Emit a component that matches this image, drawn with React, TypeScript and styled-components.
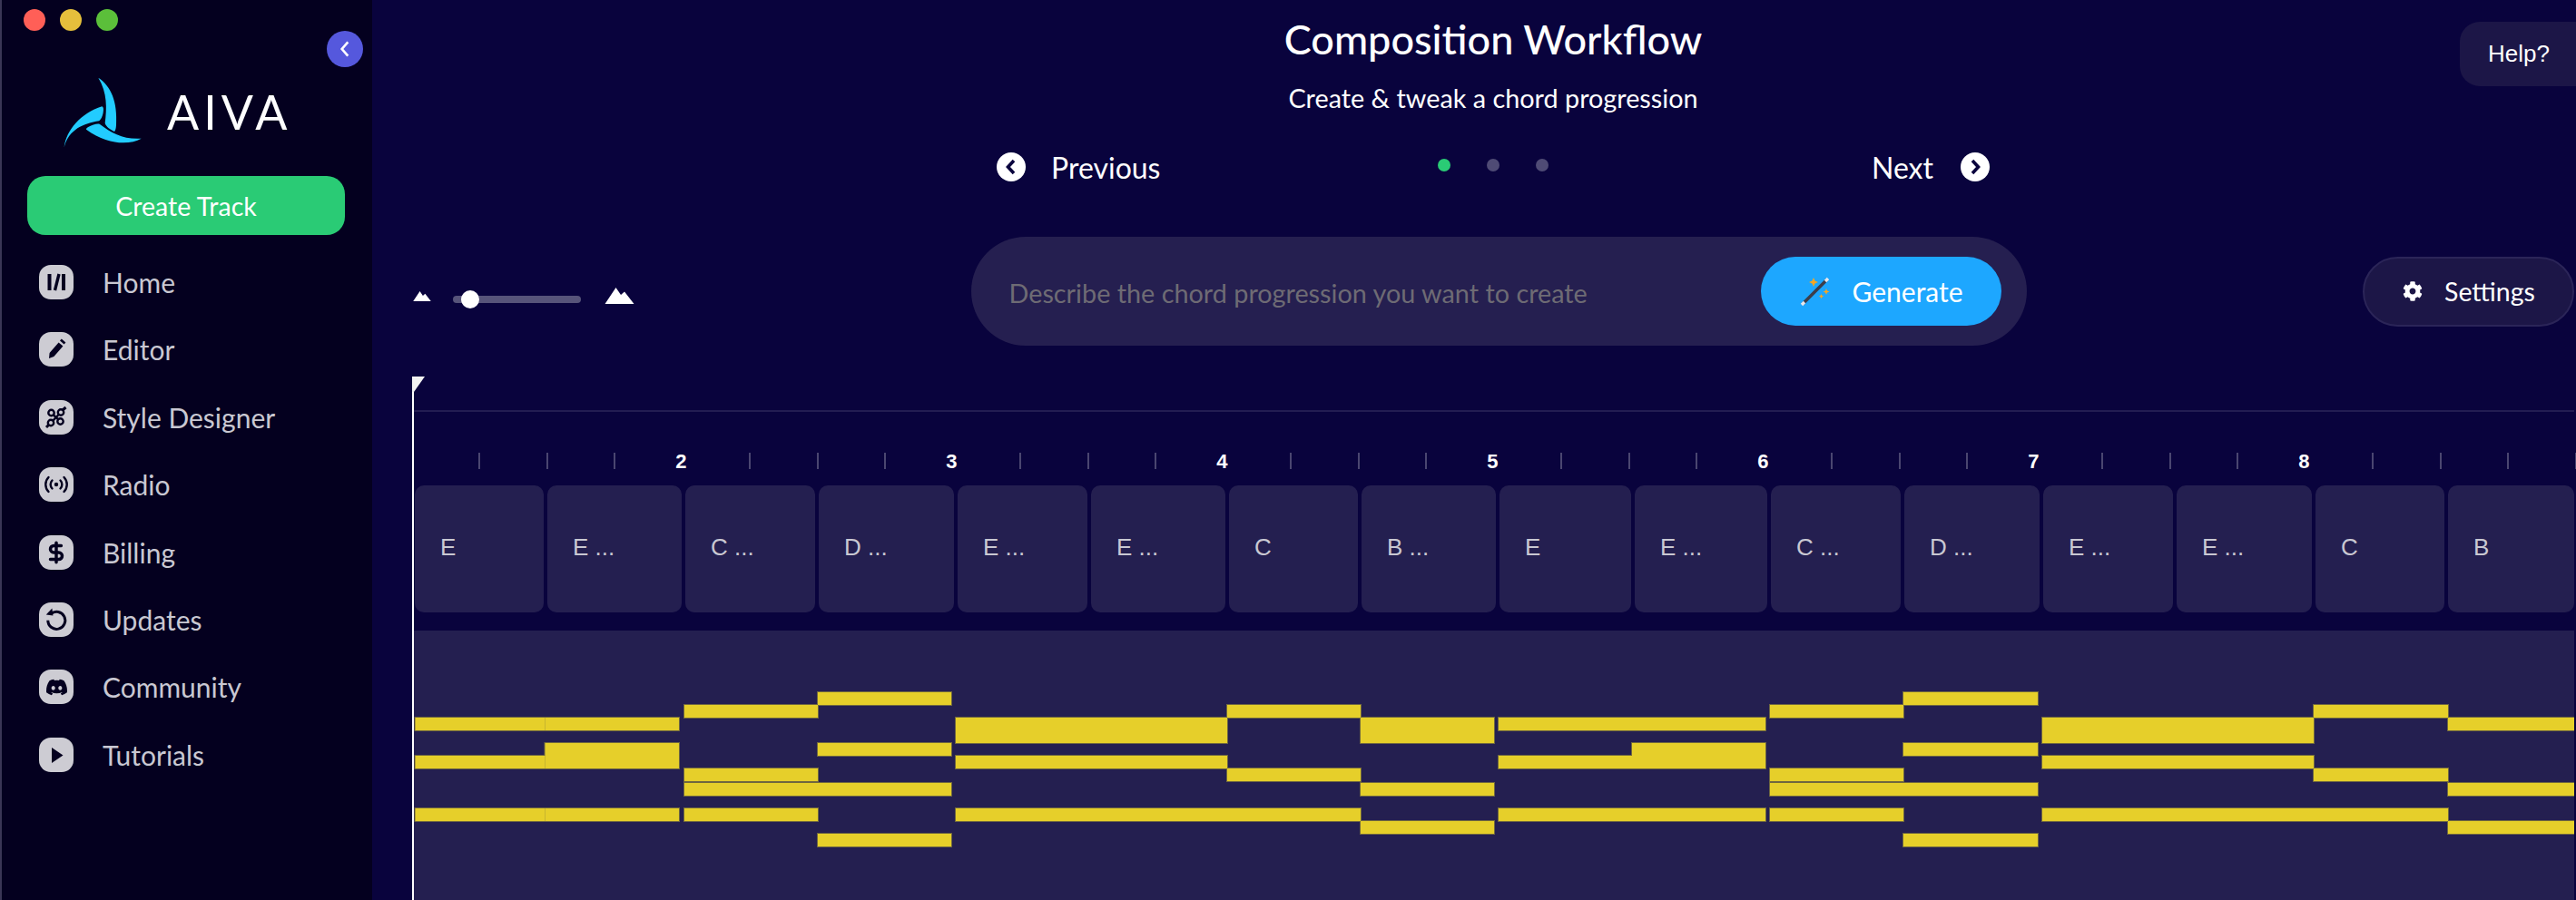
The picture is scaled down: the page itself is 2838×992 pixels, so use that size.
import { ReactNode } from "react";
import styled, { createGlobalStyle } from "styled-components";
import { DollarSign } from "lucide-react";
import { FaCog, FaDiscord } from "react-icons/fa";

const GlobalStyle = createGlobalStyle`
  html, body {
    margin: 0;
    padding: 0;
    background: #09033d;
  }
`;

const Page = styled.div`
  display: flex;
  width: 2838px;
  height: 992px;
  overflow: hidden;
  font-family: Lato, "Open Sans", sans-serif;
  color: #fff;
  background: #09033d;
`;

const Sidebar = styled.aside`
  position: relative;
  flex: 0 0 408px;
  display: flex;
  flex-direction: column;
  border-left: 2px solid #3a3655;
  background: #04001f;
`;

const WindowDots = styled.div`
  display: flex;
  gap: 16px;
  padding: 10px 0 0 24px;
`;

const WindowDot = styled.span<{ $color: string }>`
  width: 24px;
  height: 24px;
  border-radius: 50%;
  background: ${(p) => p.$color};
`;

const CollapseButton = styled.button`
  position: absolute;
  top: 34px;
  right: 10px;
  width: 40px;
  height: 40px;
  padding: 0;
  display: flex;
  align-items: center;
  justify-content: center;
  border: 0;
  border-radius: 50%;
  background: #5558dd;
`;

const Brand = styled.div`
  display: flex;
  align-items: center;
  gap: 15px;
  height: 95px;
  margin: 41px 0 0 57px;
`;

const BrandName = styled.div`
  font-size: 52px;
  line-height: 52px;
  letter-spacing: 5px;
`;

const CreateButton = styled.button`
  width: 350px;
  height: 65px;
  margin: 24px 0 0 28px;
  border: 0;
  border-radius: 20px;
  background: #2acb75;
  color: #fff;
  font-family: inherit;
  font-size: 28.5px;
`;

const Nav = styled.nav`
  display: flex;
  flex-direction: column;
  gap: 36.4px;
  margin: 33px 0 0 41px;
`;

const NavRow = styled.div`
  display: flex;
  align-items: center;
  gap: 32px;
  height: 38px;
  font-size: 30px;
  color: #c9c8d2;
`;

const NavIcon = styled.span`
  flex: 0 0 38px;
  height: 38px;
  display: flex;
  align-items: center;
  justify-content: center;
  border-radius: 13px;
  background: #cdccd3;
  color: #04001f;
`;

const Main = styled.main`
  position: relative;
  flex: 1;
  min-width: 0;
  display: flex;
  flex-direction: column;
  padding-left: 44px;
  padding-right: 2px;
`;

const HelpButton = styled.button`
  position: absolute;
  top: 24px;
  right: -20px;
  width: 148px;
  height: 71px;
  padding: 0 18px 0 0;
  border: 0;
  border-radius: 22px;
  background: #1c1647;
  color: #fff;
  font-family: "Liberation Sans", Arial, sans-serif;
  font-size: 26px;
`;

const Header = styled.header`
  display: flex;
  flex-direction: column;
  align-items: center;
`;

const Title = styled.h1`
  margin: 15px 0 0;
  font-size: 45px;
  line-height: 56px;
  font-weight: 500;
`;

const Subtitle = styled.div`
  margin-top: 19px;
  font-size: 28.8px;
  line-height: 36px;
`;

const Stepper = styled.div`
  display: flex;
  align-items: center;
  width: 1094px;
  height: 40px;
  margin: 38px auto 0;
`;

const StepLink = styled.div<{ $end?: boolean }>`
  flex: 1;
  display: flex;
  align-items: center;
  justify-content: ${(p) => (p.$end ? "flex-end" : "flex-start")};
  gap: ${(p) => (p.$end ? 30 : 28)}px;
  font-size: 32px;
`;

const Pager = styled.div`
  display: flex;
  gap: 40px;
  margin-top: -4px;
`;

const PagerDot = styled.span<{ $active?: boolean }>`
  width: 14px;
  height: 14px;
  border-radius: 50%;
  background: ${(p) => (p.$active ? "#2acb75" : "#4f4b75")};
`;

const Toolbar = styled.div`
  display: flex;
  align-items: center;
  justify-content: space-between;
  margin-top: 57px;
  padding-left: 1px;
`;

const ZoomControl = styled.div`
  display: flex;
  align-items: center;
  gap: 24px;
  margin-top: 18px;
`;

const ZoomPeak = styled.svg<{ $gap?: number }>`
  margin-bottom: 8px;
  margin-left: ${(p) => p.$gap ?? 0}px;
`;

const SliderTrack = styled.div`
  position: relative;
  width: 141px;
  height: 8px;
  border-radius: 4px;
  background: #57547a;
`;

const SliderThumb = styled.span`
  position: absolute;
  top: -6px;
  left: 9px;
  width: 20px;
  height: 20px;
  border-radius: 50%;
  background: #fff;
`;

const PromptBar = styled.div`
  display: flex;
  align-items: center;
  justify-content: space-between;
  width: 1163px;
  height: 120px;
  padding: 0 28px 0 42px;
  box-sizing: border-box;
  border-radius: 60px;
  background: #251f50;
`;

const Placeholder = styled.div`
  margin-top: 4px;
  font-size: 28.8px;
  color: #6e6b74;
`;

const GenerateButton = styled.button`
  display: flex;
  align-items: center;
  gap: 24px;
  width: 265px;
  height: 76px;
  padding: 0 0 0 43px;
  border: 0;
  border-radius: 38px;
  background: #1da7ff;
  color: #fff;
  font-family: inherit;
  font-size: 30px;
`;

const SettingsButton = styled.button`
  display: flex;
  align-items: center;
  gap: 24px;
  width: 233px;
  height: 77px;
  padding: 0 0 0 42px;
  box-sizing: border-box;
  border: 2px solid #2b2558;
  border-radius: 39px;
  background: #1c1647;
  color: #fff;
  font-family: inherit;
  font-size: 28.5px;
`;

const Timeline = styled.section`
  position: relative;
  flex: 1;
  min-height: 0;
  display: flex;
  flex-direction: column;
  margin-top: 34px;
  padding-left: 2px;
`;

const Playhead = styled.div`
  position: absolute;
  top: 0;
  bottom: 0;
  left: 0;
  width: 2px;
  background: #fff;
`;

const PlayheadFlag = styled.svg`
  position: absolute;
  top: 0;
  left: 0;
`;

const TopRule = styled.div`
  height: 37px;
  border-bottom: 2px solid #231d52;
`;

const Ruler = styled.div`
  display: flex;
  height: 18px;
  margin: 45px 0 0 -2px;
  padding-left: 0.5px;
`;

const RulerCell = styled.div`
  flex: 0 0 74.5px;
  display: flex;
  justify-content: flex-end;
`;

const Tick = styled.span`
  width: 2px;
  height: 18px;
  background: #4a4670;
`;

const BarNumber = styled.span`
  margin-right: -4px;
  font-family: "Liberation Sans", Arial, sans-serif;
  font-size: 22px;
  line-height: 20px;
  font-weight: 700;
`;

const ChordRow = styled.div`
  display: flex;
  gap: 4px;
  height: 140px;
  margin: 18px 0 0 1px;
`;

const ChordCard = styled.div<{ $width: number }>`
  flex: 0 0 ${(p) => p.$width}px;
  display: flex;
  align-items: center;
  padding: 0 0 3px 28px;
  box-sizing: border-box;
  border-radius: 10px;
  background: #241f50;
  color: #c9c8d2;
  font-family: "Liberation Sans", Arial, sans-serif;
  font-size: 26px;
`;

const RollPanel = styled.div`
  flex: 1;
  min-height: 0;
  margin-top: 20px;
  background: #241f50;
`;

const RollSvg = styled.svg`
  display: block;
`;

type Note = [number, number];

const NAV_ITEMS: { label: string; icon: ReactNode }[] = [
  {
    label: "Home",
    icon: (
      <svg width="38" height="38" viewBox="0 0 38 38" fill="none" stroke="currentColor" strokeWidth="4">
        <path d="M11.500 10v18" />
        <path d="M22 10l-4.500 18" strokeWidth="3.400" />
        <path d="M27 10v18" />
      </svg>
    ),
  },
  {
    label: "Editor",
    icon: (
      <svg width="38" height="38" viewBox="0 0 38 38" fill="currentColor">
        <path d="M11 29l.6-6L21.600 11.600l4.800 4L16.400 27z" />
        <path d="M23 9.600l1.800-2 4.600 3.800-1.800 2.200z" />
      </svg>
    ),
  },
  {
    label: "Style Designer",
    icon: (
      <svg width="38" height="38" viewBox="0 0 38 38" fill="none" stroke="currentColor" strokeWidth="2.400">
        <circle cx="13.500" cy="14" r="3.200" />
        <circle cx="23.500" cy="23.500" r="3.200" />
        <circle cx="24" cy="13.500" r="3.200" />
        <circle cx="13" cy="25" r="3.200" />
        <path d="M16 16.500l5 4.600" />
        <path d="M26 11l3.500-3" strokeWidth="3" />
        <path d="M10.500 27.500L8 30" strokeWidth="3" />
        <path d="M21.600 16l-6.200 6.600" />
      </svg>
    ),
  },
  {
    label: "Radio",
    icon: (
      <svg width="38" height="38" viewBox="0 0 38 38" fill="none" stroke="currentColor" strokeWidth="2.400" strokeLinecap="round">
        <circle cx="19" cy="19" r="2.200" fill="currentColor" stroke="none" />
        <path d="M14.500 14.500a6.400 6.400 0 0 0 0 9" />
        <path d="M23.500 14.500a6.400 6.400 0 0 1 0 9" />
        <path d="M10.500 11a11.500 11.500 0 0 0 0 16" />
        <path d="M27.500 11a11.500 11.500 0 0 1 0 16" />
      </svg>
    ),
  },
  { label: "Billing", icon: <DollarSign size={26} strokeWidth={3.2} /> },
  {
    label: "Updates",
    icon: (
      <svg width="38" height="38" viewBox="0 0 38 38" fill="none" stroke="currentColor" strokeWidth="3">
        <path d="M13.200 12.600a9.500 9.500 0 1 1-3.400 7.200" />
        <path d="M14.400 6.400l1 8.200-7.600-1.200z" fill="currentColor" stroke="none" />
      </svg>
    ),
  },
  { label: "Community", icon: <FaDiscord size={25} /> },
  {
    label: "Tutorials",
    icon: (
      <svg width="38" height="38" viewBox="0 0 38 38" fill="currentColor">
        <path d="M14 11l12.500 8.500L14 28z" />
      </svg>
    ),
  },
];

const CHORDS: { label: string; width: number }[] = [
  { label: "E", width: 142 },
  { label: "E ...", width: 148 },
  { label: "C ...", width: 143 },
  { label: "D ...", width: 149 },
  { label: "E ...", width: 143 },
  { label: "E ...", width: 148 },
  { label: "C", width: 142 },
  { label: "B ...", width: 148 },
  { label: "E", width: 145 },
  { label: "E ...", width: 146 },
  { label: "C ...", width: 143 },
  { label: "D ...", width: 149 },
  { label: "E ...", width: 143 },
  { label: "E ...", width: 149 },
  { label: "C", width: 142 },
  { label: "B", width: 139 },
];

// rows of the piano roll, top y and height in page pixels
const A: Note = [763, 14];
const B: Note = [777, 14];
const C: Note = [791, 14];
const CC: Note = [791, 28];
const D: Note = [819, 14];
const DD: Note = [819, 28];
const F: Note = [833, 14];
const G: Note = [847, 14];
const H: Note = [863, 14];
const J: Note = [891, 14];
const K: Note = [905, 14];
const L: Note = [919, 14];

const NOTE_GROUPS: { from: number; to: number; notes: Note[] }[] = [
  { from: 457.5, to: 600.5, notes: [C, F, J] },
  { from: 600.5, to: 748, notes: [C, DD, J] },
  { from: 754, to: 901, notes: [B, G, H, J] },
  { from: 901, to: 1048, notes: [A, D, H, L] },
  { from: 1053, to: 1352, notes: [CC, F, J] },
  { from: 1352, to: 1499, notes: [B, G, J] },
  { from: 1499, to: 1646, notes: [CC, H, K] },
  { from: 1651, to: 1798, notes: [C, F, J] },
  { from: 1798, to: 1945, notes: [C, DD, J] },
  { from: 1950, to: 2097, notes: [B, G, H, J] },
  { from: 2097, to: 2245, notes: [A, D, H, L] },
  { from: 2250, to: 2549, notes: [CC, F, J] },
  { from: 2549, to: 2697, notes: [B, G, J] },
  { from: 2697, to: 2840, notes: [C, H, K] },
];

const ALL_NOTES = NOTE_GROUPS.flatMap((group) =>
  group.notes.map((note) => ({
    x: group.from,
    y: note[0],
    width: group.to - group.from,
    height: note[1],
  }))
);

function Chevron({ dir, color, size }: { dir: "left" | "right"; color: string; size: number }) {
  return (
    <svg width={size} height={size} viewBox="0 0 20 20" fill="none" stroke={color} strokeWidth="2.400">
      <path d={dir === "left" ? "M13 3l-6 7 6 7" : "M7 3l6 7-6 7"} />
    </svg>
  );
}

function CircleArrow({ dir }: { dir: "left" | "right" }) {
  return (
    <svg width="32" height="32" viewBox="0 0 32 32">
      <circle cx="16" cy="16" r="16" fill="#fff" />
      <path
        d={dir === "left" ? "M19 9l-6.500 7 6.500 7" : "M13 9l6.500 7-6.500 7"}
        fill="none"
        stroke="#09033d"
        strokeWidth="3.600"
      />
    </svg>
  );
}

function Logo() {
  return (
    <svg width="110" height="95" viewBox="0 0 330 285" fill="#22ccff">
      <path d="M148 32C190 60 212 110 207 190c-1 12-3 18-6 20-12-6-28-16-31-28 6-50 8-100-22-150z" />
      <path d="M35 262C42 205 90 150 160 127c5 2 6 8 4 20-2 12-7 24-14 28-50 8-100 28-115 87z" />
      <path d="M290 233c-40 22-110 22-182-30 0-4 2-6 8-9 12-6 26-11 36-9 40 30 80 52 138 48z" />
    </svg>
  );
}

function Wand() {
  return (
    <svg width="34" height="34" viewBox="0 0 34 34" fill="none">
      <path d="M3 31L30 4" stroke="#3d3d4a" strokeWidth="3.400" />
      <path d="M2 32l3-3M28 6l3-3" stroke="#e8e8ee" strokeWidth="3.400" />
      <path d="M15 2l1.600 3.400L20 7l-3.400 1.600L15 12l-1.600-3.400L10 7l3.400-1.600z" fill="#f5a623" />
      <path d="M29 14l1 2.400 2.400 1-2.400 1-1 2.400-1-2.400-2.400-1 2.400-1z" fill="#f5a623" />
      <path d="M23.500 20l.8 1.800 1.800.8-1.800.8-.8 1.800-.8-1.800-1.800-.8 1.800-.8z" fill="#f5a623" />
    </svg>
  );
}

export default function App() {
  const rulerCells = Array.from({ length: 32 }, (_, i) => i + 1);
  const peaks = "M0 18L12 0l5.500 8 4-3.500L32 18z";

  return (
    <Page>
      <GlobalStyle />
      <Sidebar>
        <WindowDots>
          <WindowDot $color="#ff5f57" />
          <WindowDot $color="#e5bf3c" />
          <WindowDot $color="#5bbf3a" />
        </WindowDots>
        <CollapseButton>
          <Chevron dir="left" color="#fff" size={22} />
        </CollapseButton>
        <Brand>
          <Logo />
          <BrandName>AIVA</BrandName>
        </Brand>
        <CreateButton>Create Track</CreateButton>
        <Nav>
          {NAV_ITEMS.map((item) => (
            <NavRow key={item.label}>
              <NavIcon>{item.icon}</NavIcon>
              {item.label}
            </NavRow>
          ))}
        </Nav>
      </Sidebar>
      <Main>
        <HelpButton>Help?</HelpButton>
        <Header>
          <Title>Composition Workflow</Title>
          <Subtitle>Create &amp; tweak a chord progression</Subtitle>
        </Header>
        <Stepper>
          <StepLink>
            <CircleArrow dir="left" />
            Previous
          </StepLink>
          <Pager>
            <PagerDot $active />
            <PagerDot />
            <PagerDot />
          </Pager>
          <StepLink $end>
            Next
            <CircleArrow dir="right" />
          </StepLink>
        </Stepper>
        <Toolbar>
          <ZoomControl>
            <ZoomPeak width="20" height="11" viewBox="0 0 32 18" fill="#fff">
              <path d={peaks} />
            </ZoomPeak>
            <SliderTrack>
              <SliderThumb />
            </SliderTrack>
            <ZoomPeak $gap={2} width="33" height="18" viewBox="0 0 32 18" fill="#fff">
              <path d={peaks} />
            </ZoomPeak>
          </ZoomControl>
          <PromptBar>
            <Placeholder>Describe the chord progression you want to create</Placeholder>
            <GenerateButton>
              <Wand />
              Generate
            </GenerateButton>
          </PromptBar>
          <SettingsButton>
            <FaCog size={22} />
            Settings
          </SettingsButton>
        </Toolbar>
        <Timeline>
          <TopRule />
          <Ruler>
            {rulerCells.map((n) => (
              <RulerCell key={n}>
                {n % 4 === 0 && n <= 28 ? <BarNumber>{n / 4 + 1}</BarNumber> : <Tick />}
              </RulerCell>
            ))}
          </Ruler>
          <ChordRow>
            {CHORDS.map((chord, i) => (
              <ChordCard key={i} $width={chord.width}>
                {chord.label}
              </ChordCard>
            ))}
          </ChordRow>
          <RollPanel>
            <RollSvg width="2380" height="297" viewBox="456 695 2380 297">
              {ALL_NOTES.map((note) => (
                <rect key={`edge-${note.x}-${note.y}`} {...note} fill="none" stroke="#6f6740" strokeWidth="2" />
              ))}
              {ALL_NOTES.map((note) => (
                <rect key={`fill-${note.x}-${note.y}`} {...note} fill="#e6cf2a" />
              ))}
            </RollSvg>
          </RollPanel>
          <Playhead />
          <PlayheadFlag width="14" height="17" viewBox="0 0 14 17">
            <path d="M0 0h14L2 17H0z" fill="#f2f2f2" />
          </PlayheadFlag>
        </Timeline>
      </Main>
    </Page>
  );
}
